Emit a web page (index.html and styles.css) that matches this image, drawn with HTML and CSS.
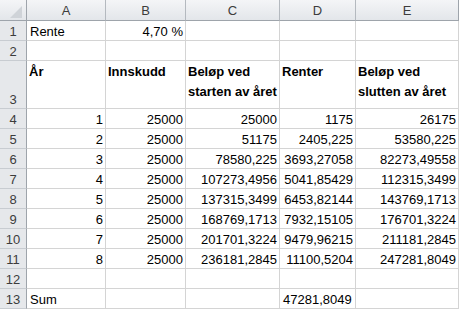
FILE: index.html
```html
<!doctype html>
<html>
	<head>
		<title>Rente</title>
		<link rel="stylesheet" href="styles.css">
	</head>
	<body>
		<div class="sheet">
			<div class="corner"><span class="corner-mark"></span></div>
			<div class="col-head">A</div>
			<div class="col-head">B</div>
			<div class="col-head">C</div>
			<div class="col-head">D</div>
			<div class="col-head">E</div>

			<div class="row-head">1</div>
			<div class="cell">Rente</div>
			<div class="cell num">4,70 %</div>
			<div class="cell"></div>
			<div class="cell"></div>
			<div class="cell"></div>

			<div class="row-head">2</div>
			<div class="cell"></div>
			<div class="cell"></div>
			<div class="cell"></div>
			<div class="cell"></div>
			<div class="cell"></div>

			<div class="row-head">3</div>
			<div class="cell head">År</div>
			<div class="cell head">Innskudd</div>
			<div class="cell head">Beløp ved starten av året</div>
			<div class="cell head">Renter</div>
			<div class="cell head">Beløp ved slutten av året</div>

			<div class="row-head">4</div>
			<div class="cell num">1</div>
			<div class="cell num">25000</div>
			<div class="cell num">25000</div>
			<div class="cell num">1175</div>
			<div class="cell num">26175</div>

			<div class="row-head">5</div>
			<div class="cell num">2</div>
			<div class="cell num">25000</div>
			<div class="cell num">51175</div>
			<div class="cell num">2405,225</div>
			<div class="cell num">53580,225</div>

			<div class="row-head">6</div>
			<div class="cell num">3</div>
			<div class="cell num">25000</div>
			<div class="cell num">78580,225</div>
			<div class="cell num">3693,27058</div>
			<div class="cell num">82273,49558</div>

			<div class="row-head">7</div>
			<div class="cell num">4</div>
			<div class="cell num">25000</div>
			<div class="cell num">107273,4956</div>
			<div class="cell num">5041,85429</div>
			<div class="cell num">112315,3499</div>

			<div class="row-head">8</div>
			<div class="cell num">5</div>
			<div class="cell num">25000</div>
			<div class="cell num">137315,3499</div>
			<div class="cell num">6453,82144</div>
			<div class="cell num">143769,1713</div>

			<div class="row-head">9</div>
			<div class="cell num">6</div>
			<div class="cell num">25000</div>
			<div class="cell num">168769,1713</div>
			<div class="cell num">7932,15105</div>
			<div class="cell num">176701,3224</div>

			<div class="row-head">10</div>
			<div class="cell num">7</div>
			<div class="cell num">25000</div>
			<div class="cell num">201701,3224</div>
			<div class="cell num">9479,96215</div>
			<div class="cell num">211181,2845</div>

			<div class="row-head">11</div>
			<div class="cell num">8</div>
			<div class="cell num">25000</div>
			<div class="cell num">236181,2845</div>
			<div class="cell num">11100,5204</div>
			<div class="cell num">247281,8049</div>

			<div class="row-head">12</div>
			<div class="cell"></div>
			<div class="cell"></div>
			<div class="cell"></div>
			<div class="cell"></div>
			<div class="cell"></div>

			<div class="row-head">13</div>
			<div class="cell">Sum</div>
			<div class="cell"></div>
			<div class="cell"></div>
			<div class="cell">47281,8049</div>
			<div class="cell"></div>
		</div>
	</body>
</html>
```

FILE: styles.css
```css
html, body {
	padding: 0;
	margin: 0;
	background: white;
}
body {
	font-family: "Liberation Sans", Arial, sans-serif;
	font-size: 13px;
	color: black;
}

.sheet {
	display: grid;
	grid-template-columns: 27px 79px 80px 94px 76px 103px;
	grid-template-rows: 21px 20px 20px 48px repeat(10, 20px);
	width: 459px;
}
.sheet > div {
	box-sizing: border-box;
	line-height: 17px;
	white-space: nowrap;
	overflow: hidden;
}

/* headers */
.corner {
	background: linear-gradient(#f4f5f7, #e3e6ea);
	border-right: 1px solid #9ea4ab;
	border-bottom: 1px solid #9ea4ab;
	display: flex;
	align-items: flex-end;
	justify-content: flex-end;
	padding: 0 4px 2px 0;
}
.corner-mark {
	width: 0;
	height: 0;
	border-left: 12px solid transparent;
	border-bottom: 12px solid #cfd3d8;
}
.col-head {
	background: linear-gradient(#f4f5f7, #e3e6ea);
	border-right: 1px solid #b4b9bf;
	border-bottom: 1px solid #9ea4ab;
	color: #3c3c3c;
	display: flex;
	align-items: center;
	justify-content: center;
}
.col-head:nth-child(6) {
	border-right-color: #9ea4ab;
}
.row-head {
	background: #e6e8eb;
	border-right: 1px solid #9ea4ab;
	border-bottom: 1px solid #c8ccd1;
	color: #3c3c3c;
	display: flex;
	align-items: flex-end;
	justify-content: center;
}

/* cells */
.cell {
	border-right: 1px solid #d4d4d4;
	border-bottom: 1px solid #d4d4d4;
	padding: 0 3px;
	display: flex;
	align-items: flex-end;
}
.num {
	justify-content: flex-end;
	padding-right: 2px;
}
.head {
	font-weight: bold;
	white-space: normal !important;
	align-items: flex-start;
	line-height: 20px !important;
	padding: 1px 0 0 2px;
}
```
